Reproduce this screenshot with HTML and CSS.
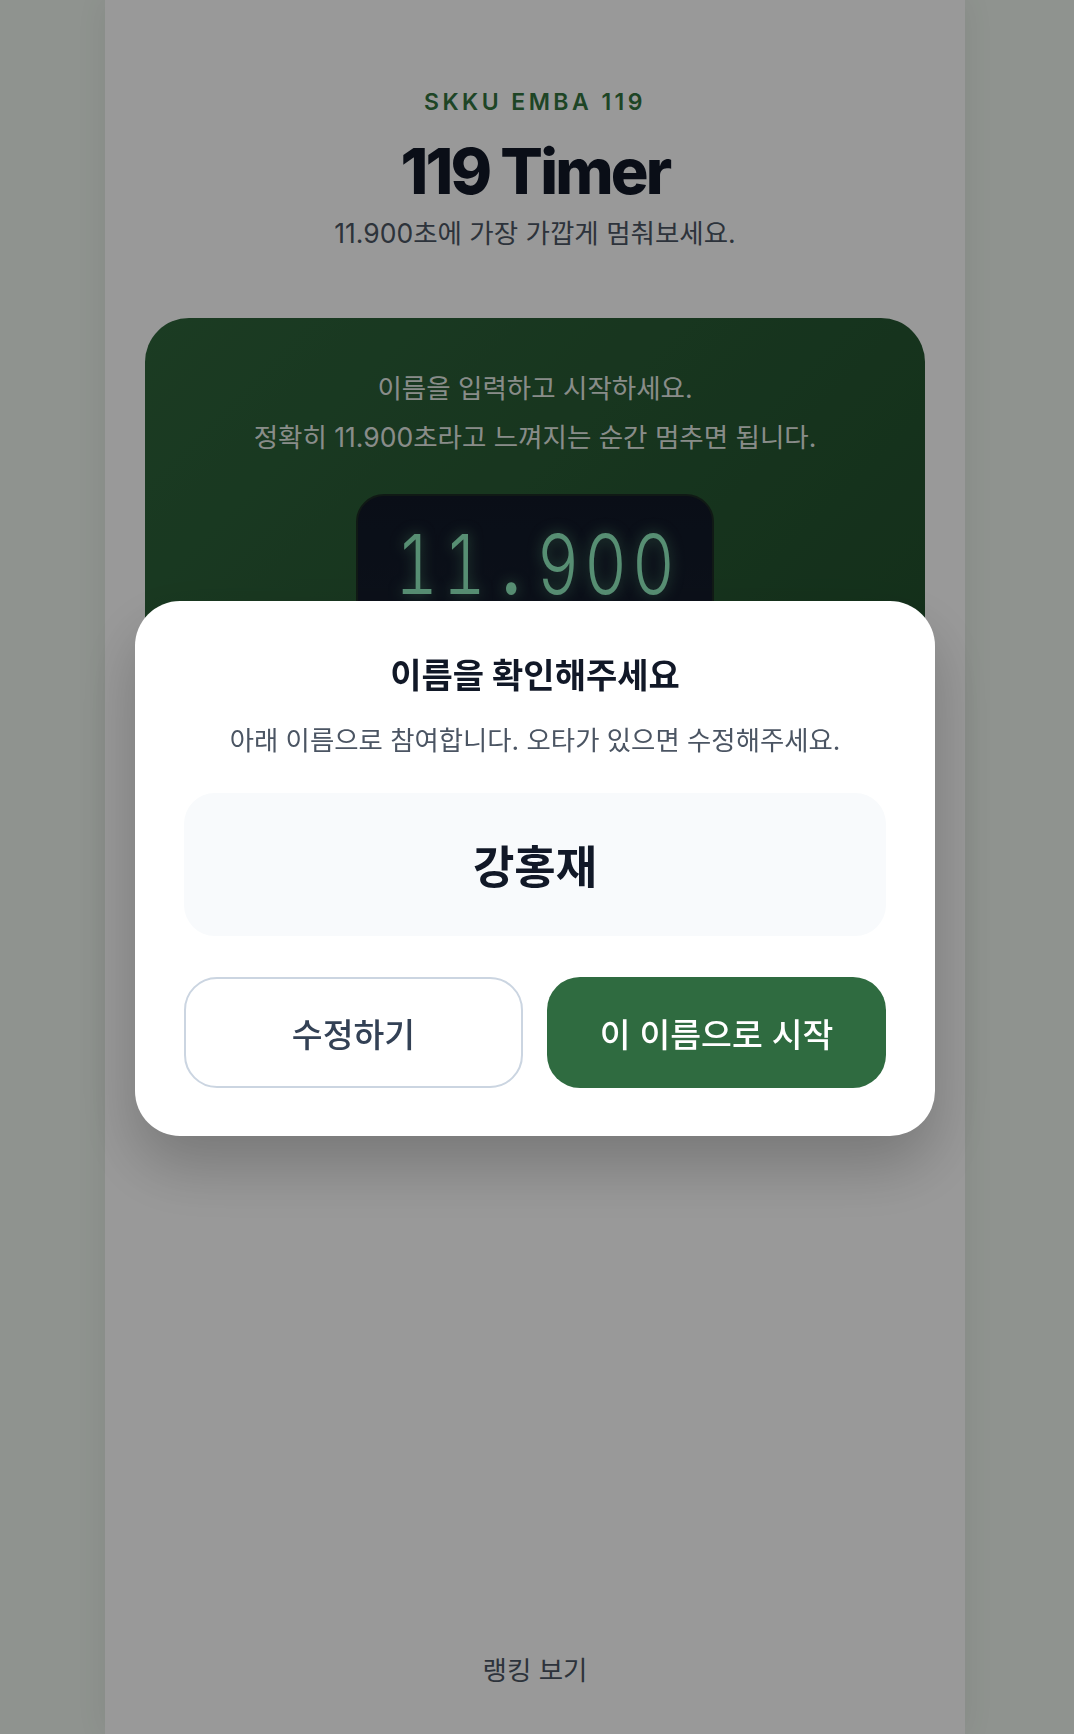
FILE: index.html
```html
<!DOCTYPE html>
<html lang="ko">
<head>
    <meta charset="UTF-8">
    <meta name="viewport" content="width=device-width, initial-scale=1.0">
    <title>119 Timer</title>
    <link rel="stylesheet" href="styles.css">
</head>
<body>

<div class="page">
    <header class="top">
        <p class="brand">SKKU EMBA 119</p>
        <h1>119 Timer</h1>
        <p class="lead">11.900초에 가장 가깝게 멈춰보세요.</p>
    </header>

    <section class="game">
        <p class="guide">이름을 입력하고 시작하세요.<br>정확히 11.900초라고 느껴지는 순간 멈추면 됩니다.</p>
        <div class="display">
            <span class="digits">11<span class="dot">.</span>900</span>
        </div>
        <input class="name-input" type="text" value="강홍재">
        <button class="go">시작하기</button>
    </section>

    <a class="ranking" href="#">랭킹 보기</a>
</div>

<div class="overlay">
    <div class="modal">
        <h2>이름을 확인해주세요</h2>
        <p class="modal-text">아래 이름으로 참여합니다. 오타가 있으면 수정해주세요.</p>
        <div class="name-box">강홍재</div>
        <div class="actions">
            <button class="btn btn-edit">수정하기</button>
            <button class="btn btn-start">이 이름으로 시작</button>
        </div>
    </div>
</div>

</body>
</html>
```

FILE: styles.css
```css
* {
    box-sizing: border-box;
}
body {
    margin: 0;
    padding: 0 4px 0 0;
    background-color: #eef5ee;
    font-family: Inter, "Noto Sans CJK KR", sans-serif;
    color: #111827;
}
.page {
    width: 860px;
    min-height: 1734px;
    margin: 0 auto;
    background-color: #fff;
    box-shadow: 0 0 30px rgba(0, 0, 0, 0.07);
    display: flex;
    flex-direction: column;
    align-items: center;
}
.top {
    text-align: center;
    padding-top: 88px;
}
.brand {
    margin: 0;
    font-size: 23px;
    line-height: 28px;
    font-weight: 600;
    letter-spacing: 0.15em;
    color: #33733f;
}
.top h1 {
    margin: 17px 0 0;
    font-size: 63px;
    line-height: 76px;
    font-weight: 800;
    letter-spacing: -0.045em;
    color: #111827;
}
.lead {
    margin: 6px 0 0;
    font-size: 26.5px;
    line-height: 36px;
    color: #4b5563;
}
.game {
    width: 780px;
    margin-top: 67px;
    padding: 46px 40px 44px;
    border-radius: 44px;
    background: linear-gradient(135deg, #2e643b 0%, #1f4c2a 100%);
    display: flex;
    flex-direction: column;
    align-items: center;
}
.guide {
    margin: 0;
    text-align: center;
    font-size: 26.5px;
    line-height: 49px;
    color: rgba(255, 255, 255, 0.9);
}
.display {
    margin-top: 32px;
    width: 358px;
    height: 140px;
    border-radius: 28px;
    background: linear-gradient(180deg, #111827 0%, #141c2b 100%);
    border: 2px solid #1c2b24;
    display: flex;
    justify-content: center;
    padding-top: 28px;
}
.digits {
    display: inline-block;
    height: 80px;
    font-family: Inter, sans-serif;
    font-weight: 300;
    font-variant-numeric: tabular-nums;
    font-size: 66px;
    line-height: 80px;
    letter-spacing: 5px;
    margin-right: -5px;
    color: #92eec0;
    transform: scaleY(1.25);
    text-shadow: 0 0 12px rgba(134, 239, 172, 0.5);
}
.dot {
    display: inline-block;
    width: 46px;
    text-align: center;
    font-weight: 600;
}
.name-input {
    margin-top: 28px;
    width: 100%;
    height: 64px;
    border: none;
    border-radius: 18px;
    padding: 0 20px;
    font: inherit;
    font-size: 24px;
}
.go {
    margin-top: 20px;
    width: 100%;
    height: 64px;
    border: none;
    border-radius: 18px;
    background-color: #86efac;
    font: inherit;
    font-size: 24px;
}
.ranking {
    margin-top: auto;
    margin-bottom: 47px;
    font-size: 26.5px;
    line-height: 34px;
    color: #4b5563;
    text-decoration: none;
}

/* confirm dialog */
.overlay {
    position: fixed;
    inset: 0;
    padding: 601px 4px 0 0;
    background-color: rgba(0, 0, 0, 0.4);
    display: flex;
    justify-content: center;
    align-items: flex-start;
}
.modal {
    width: 800px;
    padding: 53px 49px 48px;
    background-color: #fff;
    border-radius: 45px;
    box-shadow: 0 30px 60px rgba(0, 0, 0, 0.22);
    text-align: center;
}
.modal h2 {
    margin: 0;
    font-size: 34px;
    line-height: 44px;
    font-weight: 700;
    color: #111827;
}
.modal-text {
    margin: 25px 0 0;
    font-size: 26.4px;
    line-height: 34px;
    color: #4b5563;
}
.name-box {
    margin-top: 36px;
    height: 143px;
    border-radius: 31px;
    background-color: #f8fafc;
    display: flex;
    align-items: center;
    justify-content: center;
    font-size: 45px;
    font-weight: 700;
    color: #111827;
}
.actions {
    margin-top: 41px;
    display: grid;
    grid-template-columns: 1fr 1fr;
    gap: 24px;
}
.btn {
    height: 111px;
    border-radius: 33px;
    font-family: inherit;
    font-size: 33.5px;
    font-weight: 500;
    cursor: pointer;
}
.btn-edit {
    background-color: #fff;
    border: 2px solid #cbd5e1;
    color: #334155;
}
.btn-start {
    background-color: #2f6b40;
    border: none;
    color: #fff;
}
```
